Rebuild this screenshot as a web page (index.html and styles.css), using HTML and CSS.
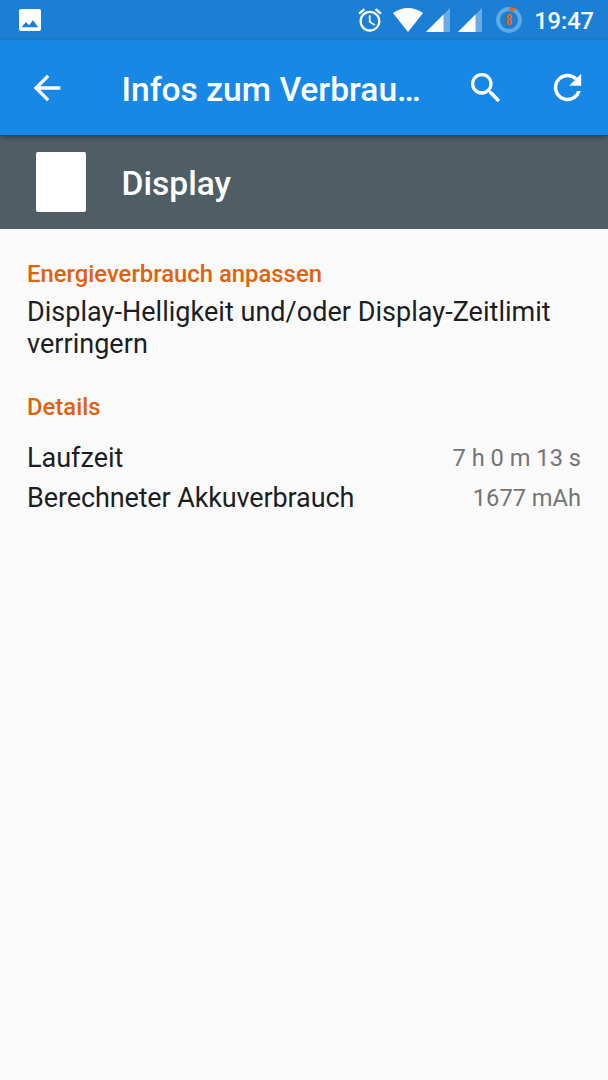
FILE: index.html
```html
<!DOCTYPE html>
<html lang="de">
<head>
    <meta charset="UTF-8">
    <meta name="viewport" content="width=device-width, initial-scale=1.0">
    <title>Infos zum Verbrauch</title>
    <link rel="stylesheet" href="styles.css">
</head>
<body>
    <div class="status-bar">
        <svg class="picture" width="22" height="22" viewBox="0 0 22 22">
            <path fill="#fff" fill-rule="evenodd" d="M2 0h18a2 2 0 0 1 2 2v18a2 2 0 0 1-2 2H2a2 2 0 0 1-2-2V2a2 2 0 0 1 2-2zM2.500 18.200h16.800L14 11.200l-4 5-3-3.200z"/>
        </svg>
        <svg class="alarm" width="28" height="28" viewBox="0 0 24 24">
            <path fill="#fff" d="M22 5.720l-4.600-3.860-1.290 1.530 4.600 3.860L22 5.720zM7.880 3.390L6.600 1.860 2 5.710l1.290 1.530 4.590-3.850zM12.500 8H11v6l4.750 2.850.75-1.230-4-2.370V8zM12 4c-4.970 0-9 4.030-9 9s4.020 9 9 9a9 9 0 0 0 0-18zm0 16c-3.870 0-7-3.130-7-7s3.130-7 7-7 7 3.130 7 7-3.130 7-7 7z"/>
        </svg>
        <svg class="wifi" width="30" height="24" viewBox="0 0 30 24">
            <path fill="#fff" d="M0 5Q15-5 30 5L15 24z"/>
        </svg>
        <svg class="signal" width="24" height="24" viewBox="0 0 24 24">
            <path fill="#fff" opacity=".35" d="M0 24L24 0v24z"/>
            <path fill="#fff" d="M0 24L17.500 6.500V24z"/>
        </svg>
        <svg class="signal second" width="24" height="24" viewBox="0 0 24 24">
            <path fill="#fff" opacity=".35" d="M0 24L24 0v24z"/>
            <path fill="#fff" d="M0 24L17.500 6.500V24z"/>
        </svg>
        <div class="battery">
            <svg width="26" height="26" viewBox="0 0 26 26">
                <circle cx="13" cy="13" r="11" fill="none" stroke="#62a9e3" stroke-width="3.800"/>
                <path d="M13 2a11 11 0 0 1 5.300 1.350" fill="none" stroke="#e8650f" stroke-width="3.800"/>
            </svg>
            <span>8</span>
        </div>
        <span class="clock">19:47</span>
    </div>
    <div class="toolbar">
        <svg class="back" width="40" height="40" viewBox="0 0 24 24">
            <path fill="#fff" d="M20 11H7.830l5.590-5.590L12 4l-8 8 8 8 1.410-1.410L7.830 13H20v-2z"/>
        </svg>
        <h1>Infos zum Verbrau…</h1>
        <svg class="search" width="40" height="40" viewBox="0 0 24 24">
            <path fill="#fff" d="M15.500 14h-.79l-.28-.27A6.470 6.470 0 0 0 16 9.500 6.500 6.500 0 1 0 9.500 16c1.610 0 3.090-.59 4.230-1.570l.27.280v.79l5 4.990L20.490 19l-4.990-5zm-6 0C7.010 14 5 11.990 5 9.500S7.010 5 9.500 5 14 7.010 14 9.500 11.990 14 9.500 14z"/>
        </svg>
        <svg class="refresh" width="41" height="41" viewBox="0 0 24 24">
            <path fill="#fff" d="M17.650 6.350A7.960 7.960 0 0 0 12 4a8 8 0 1 0 7.730 10h-2.080A6 6 0 1 1 12 6c1.660 0 3.140.69 4.220 1.780L13 11h7V4l-2.350 2.350z"/>
        </svg>
    </div>
    <div class="app-header">
        <div class="app-icon"></div>
        <h2>Display</h2>
    </div>
    <div class="content">
        <h3>Energieverbrauch anpassen</h3>
        <p>Display-Helligkeit und/oder Display-Zeitlimit verringern</p>
        <h3 class="details">Details</h3>
        <div class="row">
            <span>Laufzeit</span>
            <span class="value">7 h 0 m 13 s</span>
        </div>
        <div class="row">
            <span class="usage">Berechneter Akkuverbrauch</span>
            <span class="value">1677 mAh</span>
        </div>
    </div>
</body>
</html>
```
FILE: styles.css
```css
body {
    font-family: Roboto, sans-serif;
    margin: 0;
    height: 1080px;
    overflow: hidden;
    background-color: #fafafa;
    color: #1c1e1f;
}
svg {
    display: block;
    flex-shrink: 0;
}
h1, h2, h3, p {
    margin: 0;
    font-weight: 500;
}
.status-bar {
    display: flex;
    align-items: center;
    box-sizing: border-box;
    height: 40px;
    padding: 0 14px 0 19.400px;
    background-color: #1b80d5;
    color: #fff;
}
.alarm {
    margin-left: auto;
    margin-right: 9px;
}
.signal {
    margin-left: 3.500px;
}
.signal.second {
    margin-left: 8px;
}
.battery {
    position: relative;
    margin-left: 14px;
}
.battery span {
    position: absolute;
    inset: 0;
    color: #e8650f;
    font-size: 15px;
    font-weight: 900;
    line-height: 27px;
    text-align: center;
    transform: scaleX(0.72);
}
.clock {
    margin-left: 12px;
    padding-top: 2px;
    font-size: 23.600px;
    font-weight: 500;
}
.toolbar {
    display: flex;
    align-items: center;
    position: relative;
    box-sizing: border-box;
    height: 95px;
    padding: 0 20px 0 27px;
    background-color: #1888e6;
    color: #fff;
    box-shadow: 0 2px 5px rgba(0, 0, 0, 0.4);
}
.toolbar h1 {
    flex: 1;
    margin-left: 54.500px;
    padding-top: 3px;
    font-size: 33.600px;
    white-space: nowrap;
}
.refresh {
    margin-left: 41px;
}
.app-header {
    display: flex;
    align-items: center;
    box-sizing: border-box;
    height: 94.400px;
    padding: 0 36px 1px;
    background-color: #4f5e65;
    color: #fff;
}
.app-icon {
    width: 49.500px;
    height: 60px;
    border-radius: 2px;
    background-color: #fff;
}
.app-header h2 {
    margin-left: 36px;
    padding-top: 4px;
    font-size: 33.600px;
}
.content {
    padding: 28.600px 27px;
}
.content h3 {
    color: #e0620d;
    font-size: 23.850px;
    line-height: 32px;
}
.content p {
    font-size: 27px;
    font-weight: 400;
    line-height: 32px;
    margin-top: 6px;
    letter-spacing: 0.030px;
}
.content .details {
    margin: 31px 0 15px;
}
.row {
    display: flex;
    justify-content: space-between;
    align-items: center;
    height: 40px;
    font-size: 27px;
}
.usage {
    letter-spacing: -0.120px;
}
.value {
    padding-top: 1px;
    color: #757575;
    font-size: 23.650px;
}
```
